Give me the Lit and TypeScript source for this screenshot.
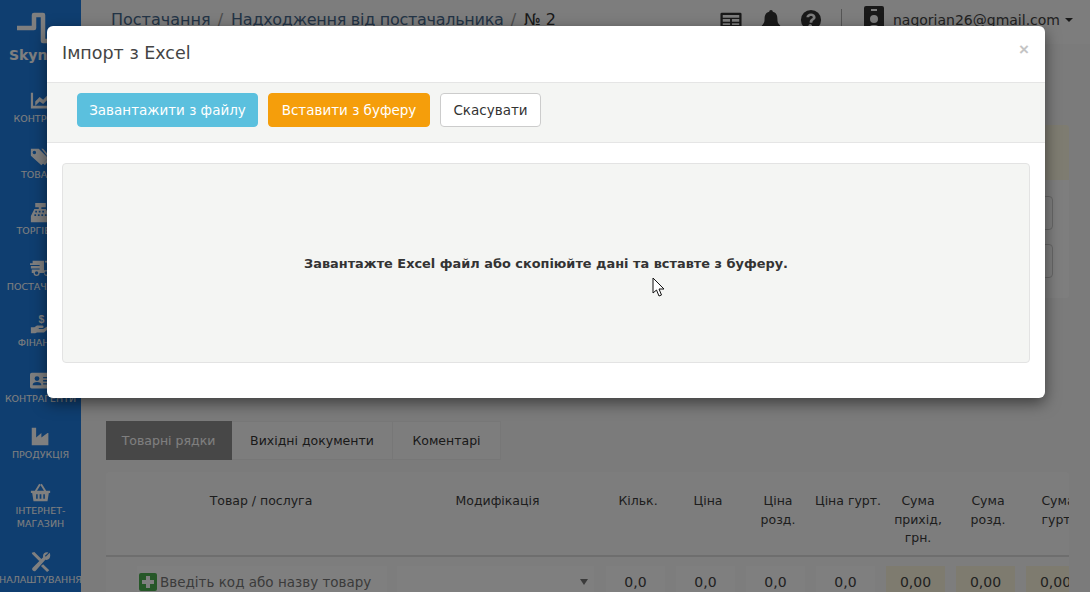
import { LitElement, html, css, svg } from "lit";
import { customElement } from "lit/decorators.js";

const FONT_ICONS: Record<string, unknown> = {
  chart: svg`<path d="M1 3h2.500v15H24v3H1zM6 13l5-5 4 3 5-5 3 2v6l-3-3-5 5-4-3-5 5z"/>`,
  tags: svg`<path d="M1 3h9l11 11-8 8L1 11zM5 5.500a2 2 0 1 0 0 4 2 2 0 0 0 0-4zM13 3h2l9 10.500L17 22l-2-2 6-6.500z" fill-rule="evenodd"/>`,
  cash: svg`<path d="M6 1h12v5h-5v2h5l5 8v7H1v-7l4-8h5V6H6zM6 10v2h2v-2zM10 10v2h2v-2zM14 10v2h2v-2zM5 14v2h2v-2zM9 14v2h2v-2zM13 14v2h2v-2zM17 14v2h2v-2z" fill-rule="evenodd"/>`,
  truck: svg`<path d="M3 3h13v11h6V8l-3-3h-2V3h3l5 5v9h-2a3.500 3.500 0 0 1-7 0H11a3.500 3.500 0 0 1-7 0H2v-4h9v-1H1V9h10V8H0V6h3zM7.500 15a2 2 0 1 0 0 4 2 2 0 0 0 0-4zM18.500 15a2 2 0 1 0 0 4 2 2 0 0 0 0-4z" fill-rule="evenodd"/>`,
  hand: svg`<path d="M1 15h4l3-2h6a1.500 1.500 0 0 1 0 3h-4v1h5l5-3a1.500 1.500 0 0 1 2 2l-6 5H8l-2 1H1z"/><text x="13" y="10" font-size="12" font-weight="700" text-anchor="middle" font-family="Liberation Sans, sans-serif">$</text>`,
  idcard: svg`<path d="M2 3h20a2 2 0 0 1 2 2v14a2 2 0 0 1-2 2H2a2 2 0 0 1-2-2V5a2 2 0 0 1 2-2zM8 7a2.800 2.800 0 1 0 0 5.600A2.800 2.800 0 0 0 8 7zM3 17.500h10c0-2.500-2-3.700-5-3.700s-5 1.200-5 3.700zM15 8v1.500h6V8zM15 11.500V13h6v-1.500zM15 15v1.500h6V15z" fill-rule="evenodd"/>`,
  factory: svg`<path d="M2 2h5v11l6-5v5l7-5h1v14H2z"/>`,
  basket: svg`<path d="M1 10h4.500l5-8 1.800 1L8 10h8l-4.300-7 1.800-1 5 8H23v2.500h-1.500L20 22H4L2.500 12.500H1zM7 14v5h1.800v-5zM11 14v5h2v-5zM15.200 14v5H17v-5z" fill-rule="evenodd"/>`,
  tools: svg`<path d="M2 2l3-1 8 8-2.500 2.500-8-8zM22.500 2L18 6.500l-1-1L21 2c-3-1.500-7 1-6 5L3 19a2.500 2.500 0 0 0 3.500 3.500L17.500 10c4 1 7-3 5-8zM15 15l7 7-2.500 2-7-7z"/>`,
};

const NAV = [
  { icon: "chart", label: ["КОНТРОЛЬ"] },
  { icon: "tags", label: ["ТОВАРИ"] },
  { icon: "cash", label: ["ТОРГІВЛЯ"] },
  { icon: "truck", label: ["ПОСТАЧАННЯ"] },
  { icon: "hand", label: ["ФІНАНСИ"] },
  { icon: "idcard", label: ["КОНТРАГЕНТИ"] },
  { icon: "factory", label: ["ПРОДУКЦІЯ"] },
  { icon: "basket", label: ["ІНТЕРНЕТ-", "МАГАЗИН"] },
  { icon: "tools", label: ["НАЛАШТУВАННЯ"] },
];

const HEADS = [
  ["Товар / послуга"],
  ["Модифікація"],
  ["Кільк."],
  ["Ціна"],
  ["Ціна", "розд."],
  ["Ціна гурт."],
  ["Сума", "прихід,", "грн."],
  ["Сума", "розд."],
  ["Сума", "гурт."],
];

@customElement("app-root")
export class AppRoot extends LitElement {
  static styles = css`
    :host {
      display: block;
      position: relative;
      width: 1090px;
      height: 592px;
      overflow: hidden;
      font-family: "DejaVu Sans", "Open Sans", sans-serif;
      color: #3a3a3a;
      background: #f6f6f6;
    }
    .page { display: flex; height: 592px; }
    .side {
      width: 81px;
      flex: none;
      background: #1f7ce0;
      color: #fff;
      display: flex;
      flex-direction: column;
      align-items: center;
      overflow: hidden;
    }
    .logo { height: 90px; flex: none; display: flex; flex-direction: column; align-items: center; padding-top: 12px; box-sizing: border-box; }
    .logo svg { width: 44px; height: 32px; display: block; margin-right: 4px; }
    .logo span { font-size: 14px; font-weight: 700; margin-top: 3px; white-space: nowrap; }
    .nav { flex: none; display: flex; flex-direction: column; align-items: center; white-space: nowrap; padding-bottom: 21px; }
    .nav svg { width: 21px; height: 21px; fill: #fff; flex: none; }
    .nav span { font-size: 9.500px; line-height: 13px; margin-top: 1px; height: 13px; }
    .nav span + span { margin-top: 0; }
    .main { flex: 1; min-width: 0; display: flex; flex-direction: column; }
    .top {
      height: 44px;
      flex: none;
      display: flex;
      align-items: center;
      padding: 0 17px 5px 30px;
      background: #fafafa;
      box-sizing: border-box;
      font-size: 16px;
    }
    .crumb { color: #46688c; white-space: nowrap; }
    .crumb i { color: #999; font-style: normal; margin: 0 3px 0 2px; }
    .crumb em { font-style: normal; letter-spacing: -0.280px; }
    .crumb b { font-weight: 400; color: #333; }
    .spacer { flex: 1; }
    .ticons { display: flex; align-items: center; gap: 18px; }
    .ticons svg { width: 22px; height: 22px; fill: #333; display: block; }
    .sep { width: 1px; height: 22px; background: #aaa; margin: 0 22px 0 19px; }
    .badge { width: 20px; height: 28px; fill: #333; margin-right: 9px; display: block; flex: none; }
    .mail { font-size: 14px; color: #444; white-space: nowrap; }
    .caret { width: 0; height: 0; border: 4px solid transparent; border-top-color: #333; border-bottom: 0; margin-left: 5px; }
    .content { flex: 1; padding: 81px 21px 0 25px; display: flex; flex-direction: column; min-height: 0; }
    .card { height: 173px; flex: none; background: #fcfcfc; border-radius: 3px; overflow: hidden; }
    .card-head { height: 55px; background: #fcf8e3; }
    .field-row { display: flex; justify-content: flex-end; padding: 16px 16px 0 0; }
    .field-row + .field-row { padding-top: 14px; }
    .field { width: 200px; height: 32px; border: 1px solid #ccc; border-radius: 4px; }
    .tabs { display: flex; margin-top: 123px; height: 39px; flex: none; font-size: 12.500px; }
    .tab { display: flex; align-items: center; justify-content: center; border: 1px solid #eee; border-left: 0; background: #fbfbfb; color: #333; white-space: nowrap; box-sizing: border-box; }
    .t0 { width: 126px; }
    .t1 { width: 161px; }
    .t2 { width: 108px; }
    .tab.on { background: #8f8f8f; color: #fff; border-color: #8f8f8f; }
    .table { margin-top: 12px; background: #fbfbfb; border-radius: 4px 4px 0 0; overflow: hidden; flex: 1; min-height: 0; }
    .grid { display: grid; grid-template-columns: 286px 211px repeat(7, 70px); width: 987px; }
    .thead { height: 85px; border-bottom: 2px solid #ddd; box-sizing: border-box; font-size: 12.500px; line-height: 18.500px; text-align: center; padding-top: 20px; }
    .thead div span { display: block; white-space: nowrap; }
    .thead div:first-child { padding-left: 24px; }
    .row { padding-top: 9px; font-size: 14px; }
    .cell { height: 32px; display: flex; align-items: center; justify-content: center; margin: 0 8px 0 3px; background: #fff; box-sizing: border-box; color: #444; }
    .cell.sum { background: #fcf6de; }
    .product { justify-content: flex-start; margin: 0 5px 0 31px; padding-left: 2px; gap: 3px; color: #777; font-size: 13.500px; white-space: nowrap; overflow: hidden; }
    .plus { width: 18px; height: 18px; flex: none; display: block; }
    .select { justify-content: flex-end; padding-right: 6px; margin: 0 9px 0 5px; }
    .select i { border: 4px solid transparent; border-top: 6px solid #777; border-bottom: 0; }

    .backdrop { position: absolute; inset: 0; background: rgba(0, 0, 0, 0.5); padding: 26px 45px 0 47px; box-sizing: border-box; }
    .modal {
      height: 372px;
      background: #fff;
      border-radius: 6px;
      box-shadow: 0 5px 15px rgba(0, 0, 0, 0.5);
      display: flex;
      flex-direction: column;
      overflow: hidden;
    }
    .mhead { height: 57px; flex: none; box-sizing: border-box; border-bottom: 1px solid #e5e5e5; display: flex; align-items: center; justify-content: space-between; padding: 0 16px 2px 15px; }
    .mhead h4 { margin: 0; font-size: 17.500px; font-weight: 400; color: #444; }
    .close { font-size: 17px; font-weight: 700; color: #c4c4c4; margin-top: -6px; font-family: "Liberation Sans", sans-serif; }
    .bar { height: 60px; flex: none; box-sizing: border-box; background: #f4f5f3; border-bottom: 1px solid #e5e5e5; display: flex; align-items: flex-start; gap: 10px; padding: 10px 30px; }
    .btn { height: 34px; box-sizing: border-box; display: flex; align-items: center; justify-content: center; border-radius: 4px; font-size: 13.500px; border: 1px solid transparent; white-space: nowrap; }
    .b1 { width: 181px; background: #5bc0de; border-color: #5bc0de; color: #fff; }
    .b2 { width: 162px; background: #f59e0b; border-color: #f59e0b; color: #fff; }
    .b3 { width: 101px; background: #fff; border-color: #ccc; color: #333; }
    .mbody { padding: 20px 15px 0; }
    .well { height: 200px; box-sizing: border-box; background: #f4f5f3; border: 1px solid #e3e3e3; border-radius: 4px; display: flex; align-items: center; justify-content: center; font-size: 12.900px; font-weight: 700; color: #333; }
    .cursor { position: absolute; left: 652px; top: 277px; width: 14px; height: 21px; display: block; }
  `;

  render() {
    return html`
      <div class="page">
        <aside class="side">
          <div class="logo">
            <svg viewBox="0 0 44 32" fill="none" stroke="#fff" stroke-width="4.500" stroke-linejoin="round">
              <path d="M1 16H18V3H27V29H43"/>
            </svg>
            <span>Skynum</span>
          </div>
          ${NAV.map(
            (n) => html`<div class="nav">
              <svg viewBox="0 0 24 24">${FONT_ICONS[n.icon]}</svg>
              ${n.label.map((l) => html`<span>${l}</span>`)}
            </div>`
          )}
        </aside>
        <div class="main">
          <header class="top">
            <div class="crumb">Постачання<i> / </i><em>Надходження від постачальника</em><i> / </i><b>№ 2</b></div>
            <div class="spacer"></div>
            <div class="ticons">
              <svg viewBox="0 0 24 24"><path d="M2 4h20a1.500 1.500 0 0 1 1.500 1.500v13A1.500 1.500 0 0 1 22 20H2a1.500 1.500 0 0 1-1.500-1.500v-13A1.500 1.500 0 0 1 2 4zM3 6.500v3h18v-3zM3 11v3h8v-3zM13 11v3h8v-3zM3 15.500v2h8v-2zM13 15.500v2h8v-2z" fill-rule="evenodd"/></svg>
              <svg viewBox="0 0 24 24"><path d="M12 1a2 2 0 0 1 2 2c4 1 5 4 5 8 0 4 1 5 3 7v2H2v-2c2-2 3-3 3-7 0-4 1-7 5-8a2 2 0 0 1 2-2zM9 21h6a3 3 0 0 1-6 0z"/></svg>
              <svg viewBox="0 0 24 24"><path d="M12 1a11 11 0 1 1 0 22 11 11 0 0 1 0-22zM12 5c-3 0-5 2-5 4h3c0-1 1-1.500 2-1.500s2 .5 2 1.500c0 1.500-3.500 2-3.500 5v1h3v-.5c0-2 3.500-2.500 3.500-5.500 0-2.500-2.500-4-5-4zM12 16.500a2 2 0 1 0 0 3.600 2 2 0 0 0 0-3.600z" fill-rule="evenodd"/></svg>
            </div>
            <div class="sep"></div>
            <svg class="badge" viewBox="0 0 20 28"><path d="M2 0h16a2 2 0 0 1 2 2v24a2 2 0 0 1-2 2H2a2 2 0 0 1-2-2V2a2 2 0 0 1 2-2zM7 3v2h6V3zM10 9a4 4 0 1 0 0 8 4 4 0 0 0 0-8zM4 24h12c0-3-2-5-6-5s-6 2-6 5z" fill-rule="evenodd"/></svg>
            <span class="mail">nagorian26@gmail.com</span>
            <span class="caret"></span>
          </header>
          <div class="content">
            <section class="card">
              <div class="card-head"></div>
              <div class="field-row"><div class="field"></div></div>
              <div class="field-row"><div class="field"></div></div>
            </section>
            <nav class="tabs">
              <div class="tab on t0">Товарні рядки</div>
              <div class="tab t1">Вихідні документи</div>
              <div class="tab t2">Коментарі</div>
            </nav>
            <section class="table">
              <div class="grid thead">
                ${HEADS.map((h) => html`<div>${h.map((l) => html`<span>${l}</span>`)}</div>`)}
              </div>
              <div class="grid row">
                <div class="cell product">
                  <svg class="plus" viewBox="0 0 18 18"><rect width="18" height="18" rx="2" fill="#4caf50"/><path d="M7 3h4v4h4v4h-4v4H7v-4H3V7h4z" fill="#fff"/></svg>
                  Введіть код або назву товару
                </div>
                <div class="cell select"><i></i></div>
                <div class="cell">0,0</div>
                <div class="cell">0,0</div>
                <div class="cell">0,0</div>
                <div class="cell">0,0</div>
                <div class="cell sum">0,00</div>
                <div class="cell sum">0,00</div>
                <div class="cell sum">0,00</div>
              </div>
            </section>
          </div>
        </div>
      </div>

      <div class="backdrop">
        <div class="modal">
          <div class="mhead">
            <h4>Імпорт з Excel</h4>
            <span class="close">×</span>
          </div>
          <div class="bar">
            <div class="btn b1">Завантажити з файлу</div>
            <div class="btn b2">Вставити з буферу</div>
            <div class="btn b3">Скасувати</div>
          </div>
          <div class="mbody">
            <div class="well">Завантажте Excel файл або скопіюйте дані та вставте з буферу.</div>
          </div>
        </div>
      </div>

      <svg class="cursor" viewBox="0 0 14 21">
        <path d="M1 1v15l3.500-3 2.500 6 2.500-1-2.500-6h5z" fill="#fff" stroke="#111" stroke-width="1"/>
      </svg>
    `;
  }
}
